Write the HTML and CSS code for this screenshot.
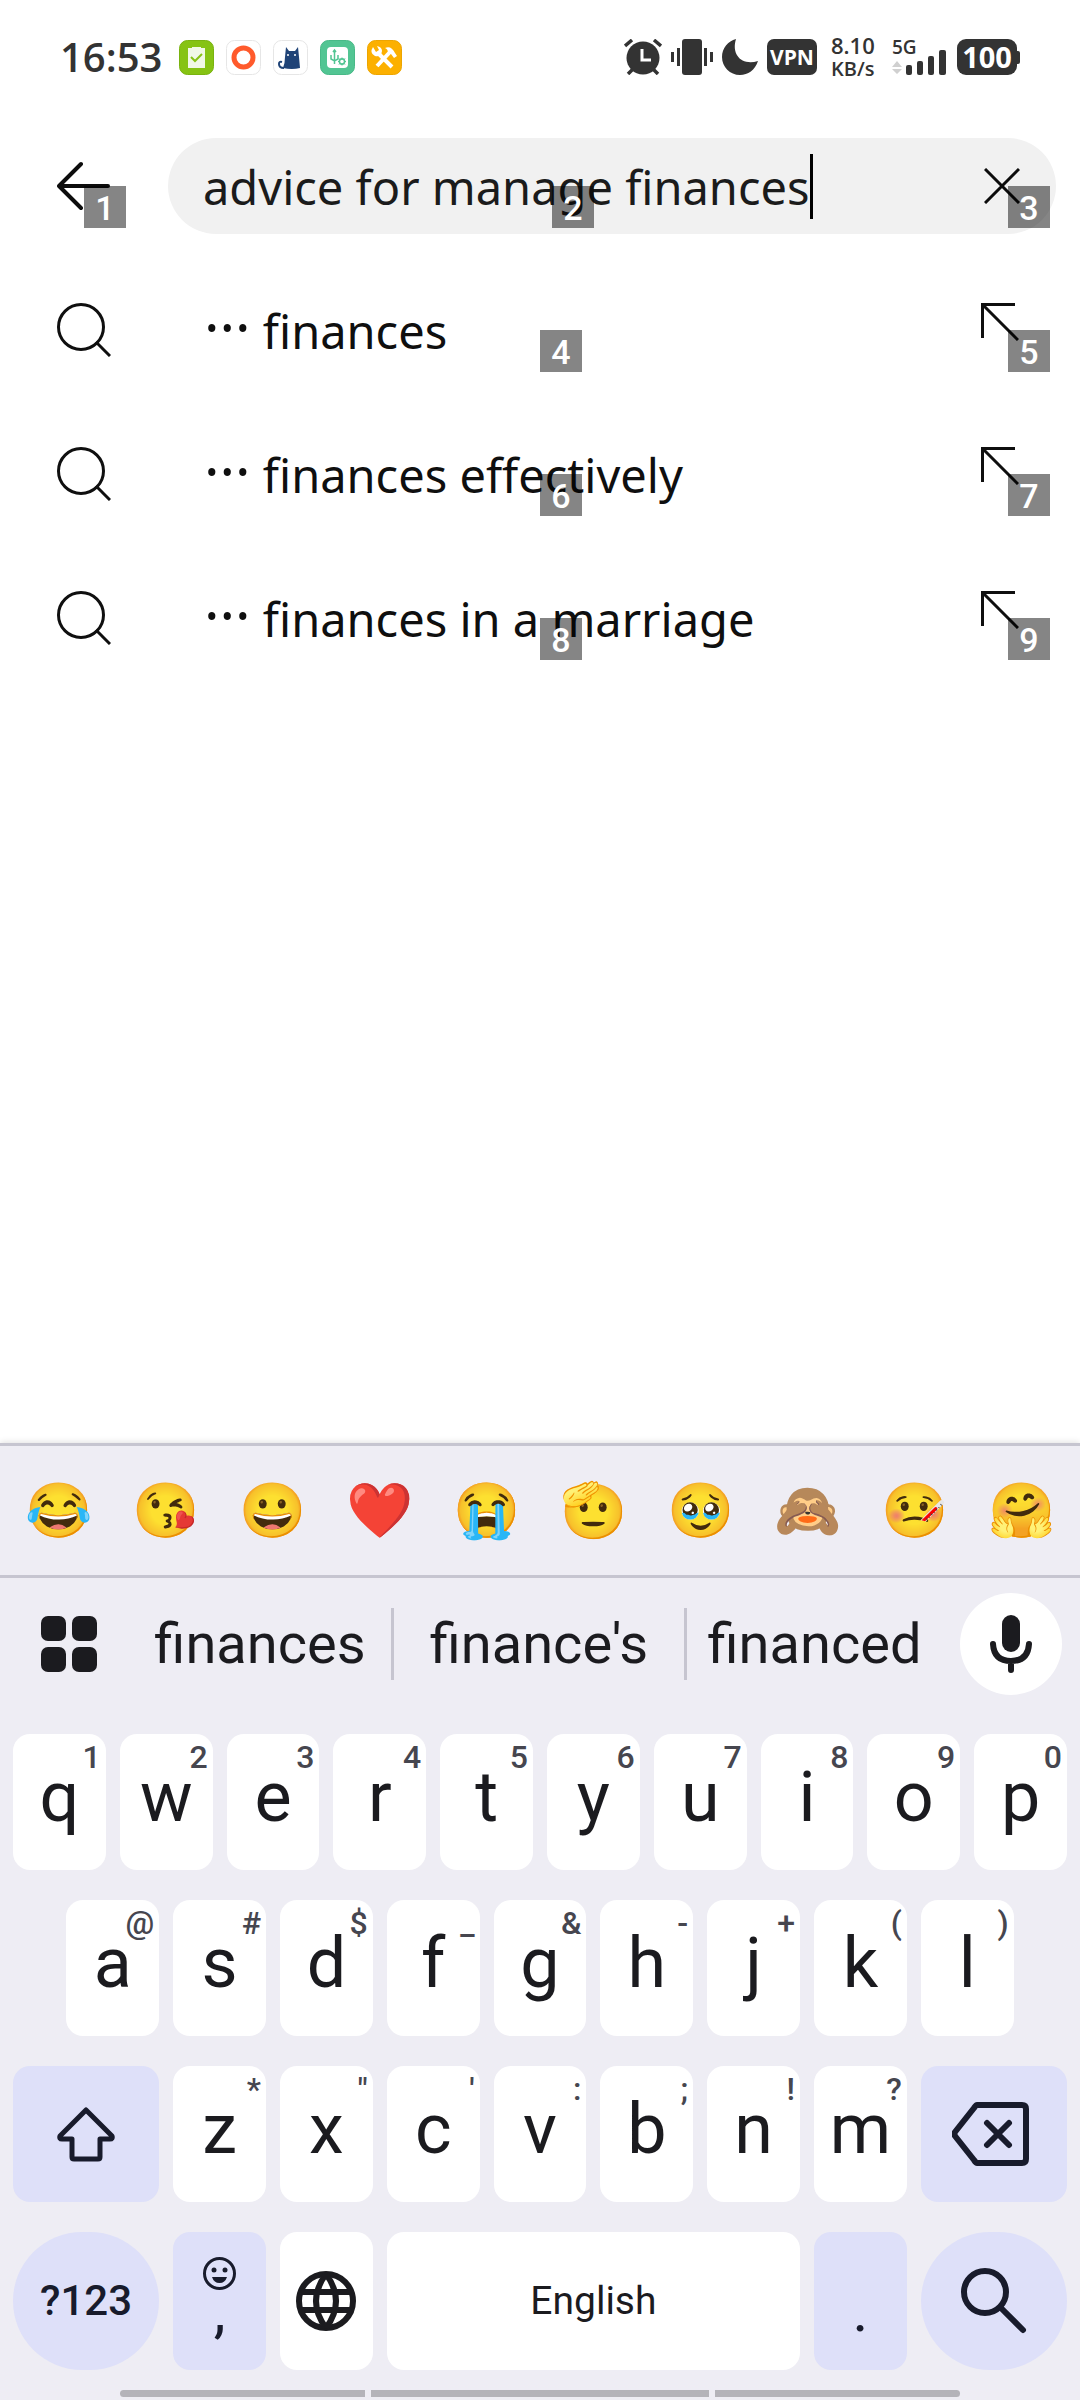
FILE: index.html
```html
<!DOCTYPE html>
<html lang="en">
<head>
<meta charset="utf-8">
<meta name="viewport" content="width=device-width, initial-scale=1">
<title>Search</title>
<link rel="stylesheet" href="styles.css">
</head>
<body>
<div class="screen">
  <div class="status">
    <span class="clock">16:53</span>
    <div class="apps">
      <svg viewBox="0 0 35 35"><rect x=".5" y=".5" width="34" height="34" rx="8" fill="#86c313" stroke="#79b30f"/><path d="M9 8h4V7h9v1h4v20H9z" fill="#f1f8e6"/><path d="M12 17l4 4 7-7" fill="none" stroke="#86c313" stroke-width="2"/></svg>
      <svg viewBox="0 0 35 35"><rect x=".5" y=".5" width="34" height="34" rx="8" fill="#fff" stroke="#e6e6e6"/><circle cx="17.500" cy="17.500" r="9.500" fill="none" stroke="#ff5a2c" stroke-width="5"/></svg>
      <svg viewBox="0 0 35 35"><rect x=".5" y=".5" width="34" height="34" rx="8" fill="#fff" stroke="#e6e6e6"/><path d="M10 28q2-5 2-11l1-10 3 4h6l3-4 1 10 1 11q-8 2-17 0z" fill="#1f4377"/><path d="M11 28q-5 0-5-4 0-3 3-2" fill="none" stroke="#1f4377" stroke-width="2"/><circle cx="15" cy="15" r="1" fill="#fff"/><circle cx="22" cy="15" r="1" fill="#fff"/></svg>
      <svg viewBox="0 0 35 35"><rect x=".5" y=".5" width="34" height="34" rx="8" fill="#52c593" stroke="#48b987"/><rect x="7" y="7" width="21" height="21" rx="4" fill="#fff"/><path d="M14.500 11v13M11 15v4l3.500 2L18 19v-4M13 12l1.500-2 1.500 2" fill="none" stroke="#52c593" stroke-width="1.500"/><circle cx="22" cy="21.500" r="2.600" fill="none" stroke="#52c593" stroke-width="1.600"/><path d="M22 17.500v8M18 21.500h1M25 21.500h1M19 18.500l1 1M25 18.500l-1 1M19 24.500l1-1M25 24.500l-1-1" stroke="#52c593" stroke-dasharray="1.500 5"/></svg>
      <svg viewBox="0 0 35 35"><rect x=".5" y=".5" width="34" height="34" rx="8" fill="#fcb000" stroke="#eda500"/><path d="M10 26L23 12M11 13l14 14" stroke="#fff" stroke-width="4"/><path d="M18 8q6-3 10 5l2 3-3 2-3-4-3-1q0-4-3-5z" fill="#fff"/><path d="M6 7q-4 6 2 9 3 1 6-1l1-4q0-4-5-5l2 4-3 2z" fill="#fff"/></svg>
    </div>
    <div class="signals">
      <svg class="alarm" viewBox="0 0 38 36"><circle cx="19" cy="19" r="16.500" fill="#333"/><path d="M1 7l7-6M37 7l-7-6M4 35l5-5M34 35l-5-5" stroke="#333" stroke-width="3.500"/><path d="M18 10v11h9" fill="none" stroke="#fff" stroke-width="3"/></svg>
      <svg class="vibrate" viewBox="0 0 42 36"><rect x="11" width="20" height="36" rx="3" fill="#333"/><path d="M1.500 13v10M7.500 9v18M34.500 9v18M40.500 13v10" stroke="#333" stroke-width="3"/></svg>
      <svg class="moon" viewBox="0 0 36 36"><path d="M14 0C9 16 20 27 36 22c-3 9-10 14-18 14C8 36 0 28 0 18 0 9 6 2 14 0z" fill="#333"/></svg>
      <span class="vpn">VPN</span>
      <span class="speed"><b>8.10</b><b class="unit">KB/s</b></span>
      <div class="cell">
        <b>5G</b>
        <svg viewBox="0 0 55 25"><path d="M0 18l5-6 5 6zM0 20h10l-5 5z" transform="translate(0 -1)" fill="#d0d0d0"/><g fill="#333"><rect x="14" y="15" width="6" height="10" rx="2"/><rect x="25" y="11" width="6" height="14" rx="2"/><rect x="36" y="6" width="6" height="19" rx="2"/><rect x="47" width="7" height="25" rx="2"/></g></svg>
      </div>
      <span class="battery">100</span>
    </div>
  </div>

  <form class="header">
    <button type="button" class="back" aria-label="Back">
      <svg viewBox="0 0 54 50"><path d="M51 25H3M24 3L2 25l22 22" fill="none" stroke="#0c0c0c" stroke-width="4" stroke-linecap="round" stroke-linejoin="round"/></svg>
      <span class="tag">1</span>
    </button>
    <div class="pill">
      <div class="field">
        <input type="text" aria-label="Search" value="advice for manage finances"><i class="caret"></i>
        <span class="tag">2</span>
      </div>
      <button type="button" class="clear" aria-label="Clear">
        <svg viewBox="0 0 36 36"><path d="M1 1l34 34M35 1L1 35" stroke="#0c0c0c" stroke-width="3"/></svg>
        <span class="tag">3</span>
      </button>
    </div>
  </form>

  <ul class="results">
    <li>
      <svg class="lens" viewBox="0 0 54 54"><circle cx="24" cy="24" r="22.500"/><path d="M39 39l14 14"/></svg>
      <a href="#"><span class="dots">···</span> finances</a>
      <button type="button" aria-label="Use suggestion"><svg viewBox="0 0 38 38"><path d="M34 1.500H1.500V35M2 2l35 35"/></svg><span class="tag">5</span></button>
      <span class="tag">4</span>
    </li>
    <li>
      <svg class="lens" viewBox="0 0 54 54"><circle cx="24" cy="24" r="22.500"/><path d="M39 39l14 14"/></svg>
      <a href="#"><span class="dots">···</span> finances effectively</a>
      <button type="button" aria-label="Use suggestion"><svg viewBox="0 0 38 38"><path d="M34 1.500H1.500V35M2 2l35 35"/></svg><span class="tag">7</span></button>
      <span class="tag">6</span>
    </li>
    <li>
      <svg class="lens" viewBox="0 0 54 54"><circle cx="24" cy="24" r="22.500"/><path d="M39 39l14 14"/></svg>
      <a href="#"><span class="dots">···</span> finances in a marriage</a>
      <button type="button" aria-label="Use suggestion"><svg viewBox="0 0 38 38"><path d="M34 1.500H1.500V35M2 2l35 35"/></svg><span class="tag">9</span></button>
      <span class="tag">8</span>
    </li>
  </ul>

  <div class="keyboard">
    <div class="emojis">
      <button>😂</button><button>😘</button><button>😀</button><button>❤️</button><button>😭</button><button>🫡</button><button>🥹</button><button>🙈</button><button>🤒</button><button>🤗</button>
    </div>
    <div class="suggest">
      <button class="menu" aria-label="Menu"><svg viewBox="0 0 56 56"><g fill="#1b1b1f"><rect width="25" height="25" rx="7"/><rect x="31" width="25" height="25" rx="7"/><rect y="31" width="25" height="25" rx="7"/><rect x="31" y="31" width="25" height="25" rx="7"/></g></svg></button>
      <button class="word">finances</button>
      <button class="word">finance's</button>
      <button class="word">financed</button>
      <button class="mic" aria-label="Voice input"><svg viewBox="0 0 42 58"><rect x="12" y="0" width="18" height="37" rx="9" fill="#1b1b1f"/><path d="M3 29q1 17 18 17t18-17M21 46v9" fill="none" stroke="#1b1b1f" stroke-width="6" stroke-linecap="round"/></svg></button>
    </div>
    <div class="keys">
      <button>q<sup>1</sup></button><button>w<sup>2</sup></button><button>e<sup>3</sup></button><button>r<sup>4</sup></button><button>t<sup>5</sup></button><button>y<sup>6</sup></button><button>u<sup>7</sup></button><button>i<sup>8</sup></button><button>o<sup>9</sup></button><button>p<sup>0</sup></button>
      <button class="indent">a<sup>@</sup></button><button>s<sup>#</sup></button><button>d<sup>$</sup></button><button>f<sup>_</sup></button><button>g<sup>&amp;</sup></button><button>h<sup>-</sup></button><button>j<sup>+</sup></button><button>k<sup>(</sup></button><button>l<sup>)</sup></button>
      <button class="wide tint" aria-label="Shift"><svg class="shift" viewBox="0 0 58 56"><path d="M29 4L3 30q-1 3 2 3h10v18q0 2 2 2h24q2 0 2-2V33h10q3 0 2-3z" fill="none" stroke="#181b2c" stroke-width="5" stroke-linejoin="round"/></svg></button>
      <button>z<sup>*</sup></button><button>x<sup>"</sup></button><button>c<sup>'</sup></button><button>v<sup>:</sup></button><button>b<sup>;</sup></button><button>n<sup>!</sup></button><button>m<sup>?</sup></button>
      <button class="wide tint" aria-label="Backspace"><svg class="erase" viewBox="0 0 83 64"><path d="M25 3h45q4 0 4 4v50q0 4-4 4H25q-1 0-3-3L3 34q-1-2 0-4L22 6q2-3 3-3zM35 21l22 22M57 21L35 43" fill="none" stroke="#181b2c" stroke-width="6" stroke-linecap="round" stroke-linejoin="round"/></svg></button>
      <button class="wide tint round symbols">?123</button>
      <button class="tint comma"><svg viewBox="0 0 33 33" aria-hidden="true"><circle cx="16.500" cy="16.500" r="15" fill="none" stroke="#181b2c" stroke-width="3"/><circle cx="11" cy="13" r="2.500" fill="#181b2c"/><circle cx="22" cy="13" r="2.500" fill="#181b2c"/><path d="M9 20h15q-2 6-7.500 6T9 20z" fill="#181b2c"/></svg><span>,</span></button>
      <button aria-label="Change language"><svg class="globe" viewBox="0 0 60 60"><g fill="none" stroke="#1b1b1f" stroke-width="6"><circle cx="30" cy="30" r="27"/><path d="M5 21h50M5 39h50M30 3q-20 27 0 54M30 3q20 27 0 54"/></g></svg></button>
      <button class="space">English</button>
      <button class="tint period"><span>.</span></button>
      <button class="wide tint round" aria-label="Search"><svg class="find" viewBox="0 0 66 66"><path d="M40 40l22 22" stroke="#181b2c" stroke-width="6" stroke-linecap="round"/><circle cx="24" cy="24" r="21" fill="none" stroke="#181b2c" stroke-width="6"/></svg></button>
    </div>
    <div class="nav"><i></i><i></i><i></i></div>
  </div>
</div>
</body>
</html>
```
FILE: styles.css
```css
* { box-sizing: border-box; }
body { margin: 0; background: #fff; font-family: "Noto Sans", "Open Sans", sans-serif; color: #111; }
button { border: 0; margin: 0; padding: 0; background: none; color: inherit; font: inherit; position: relative; display: flex; align-items: center; justify-content: center; }
svg { display: block; flex: none; }
.screen { min-height: 100vh; display: flex; flex-direction: column; }

/* status bar */
.status { height: 114px; padding: 0 63px 0 60px; display: flex; align-items: center; color: #333; }
.clock { font: 600 40px/48px "Open Sans", sans-serif; width: 119px; }
.apps { display: flex; gap: 12px; }
.apps svg { width: 35px; height: 35px; }
.signals { margin-left: auto; display: flex; align-items: center; gap: 9px; }
.alarm { width: 38px; height: 36px; }
.vibrate { width: 42px; height: 36px; }
.moon { width: 36px; height: 36px; }
.vpn { width: 50px; height: 36px; border-radius: 7px; background: #333; color: #fff; font: 700 21px/36px "Open Sans", sans-serif; text-align: center; }
.speed { width: 57px; padding-left: 5px; display: flex; flex-direction: column; font: 600 22px/23px "Open Sans", sans-serif; }
.speed b { font-weight: 600; }
.speed .unit { font-size: 20px; }
.cell { width: 56px; height: 36px; position: relative; display: flex; align-items: flex-end; }
.cell b { position: absolute; left: 0; top: 0; font: 600 19px/16px "Open Sans", sans-serif; }
.cell svg { width: 55px; height: 25px; }
.battery { width: 60px; height: 36px; border-radius: 9px; background: #333; color: #fff; font: 700 29px/36px "Open Sans", sans-serif; text-align: center; position: relative; }
.battery::after { content: ""; position: absolute; left: 100%; top: 12px; width: 3px; height: 13px; background: #333; border-radius: 0 2px 2px 0; }

/* search header */
.header { height: 144px; display: flex; align-items: center; padding-right: 24px; }
.back { width: 168px; height: 144px; }
.back svg { width: 54px; height: 50px; }
.pill { flex: 1; height: 96px; border-radius: 48px; background: #f1f1f1; display: flex; }
.field { flex: 1; margin-right: 24px; padding-left: 35px; display: flex; align-items: center; position: relative; }
.field input { border: 0; padding: 2px 0 0; background: none; outline: 0; color: #1b1b1b; font: 47px/64px "Noto Sans", sans-serif; font-variant-ligatures: none; field-sizing: content; }
.caret { width: 3px; height: 65px; background: #000; }
.clear { width: 96px; padding-right: 12px; }
.clear svg { width: 36px; height: 36px; }
.tag { position: absolute; left: 50%; top: 50%; width: 42px; height: 42px; background: rgba(0, 0, 0, .48); color: #fff; font: 500 34px/44px Roboto, sans-serif; text-align: center; }

/* results */
.results { list-style: none; margin: 0; padding: 0; flex: 1; }
.results li { height: 144px; position: relative; display: flex; align-items: center; padding-left: 57px; }
.results a { flex: 1; padding-top: 2px; margin-left: 93px; color: #0f0f0f; text-decoration: none; white-space: nowrap; font: 47px/64px "Noto Sans", sans-serif; font-variant-ligatures: none; }
.dots { font-size: 58px; line-height: 0; }
.results svg { fill: none; stroke: #0f0f0f; stroke-width: 3; }
.lens { width: 54px; height: 54px; }
.results button { width: 144px; height: 144px; padding: 0 16px 16px 0; }
.results button svg { width: 38px; height: 38px; }

/* keyboard */
.keyboard { background: #eeedf4; border-top: 3px solid #c6c5d0; box-shadow: 0 -1px 6px rgba(0, 0, 0, .12); color: #1b1b1f; font-family: Roboto, sans-serif; }
.emojis { height: 132px; padding: 0 5px; border-bottom: 3px solid #c6c5d0; display: flex; }
.emojis button { flex: 1; font: 54px/64px "Noto Color Emoji", sans-serif; }
.suggest { height: 132px; display: grid; grid-template-columns: 129px 262fr 293fr 258fr 138px; align-items: center; justify-items: stretch; }
.menu { padding-left: 9px; }
.menu svg { width: 56px; height: 56px; }
.word { height: 72px; font-size: 56px; }
.word + .word { border-left: 3px solid #c6c5d0; }
.mic { width: 102px; height: 102px; border-radius: 51px; background: #fff; justify-self: center; }
.mic svg { width: 42px; height: 58px; }
.keys { padding: 24px 13px 0; display: grid; grid-template-columns: repeat(20, minmax(0, 1fr)); grid-template-rows: 136px 136px 136px 138px; gap: 30px 14px; }
.keys button { grid-column: span 2; background: #fff; border-radius: 17px; font-size: 70px; line-height: 80px; padding-bottom: 10px; }
.keys button:has(svg) { padding-bottom: 0; }
.keys .indent { grid-column: 2 / span 2; }
.keys .wide { grid-column: span 3; }
.keys .space { grid-column: span 8; font-size: 39px; padding-bottom: 0; }
.keys .tint { background: #dee0f9; color: #181b2c; }
.keys .round { border-radius: 69px; }
.keys .symbols { font-size: 42px; font-weight: 500; padding-bottom: 0; }
.keys sup { position: absolute; right: 5px; top: 4px; font-size: 32px; line-height: 38px; font-weight: 500; color: #46464f; }
.keys .comma, .keys .period { flex-direction: column; justify-content: flex-start; padding-top: 25px; font-size: 60px; line-height: 42px; }
.keys .comma svg { width: 33px; height: 33px; }
.keys .period { justify-content: flex-end; padding-bottom: 38px; }
.shift { width: 58px; height: 56px; }
.erase { width: 83px; height: 64px; }
.globe { width: 60px; height: 60px; }
.find { width: 66px; height: 66px; }
.nav { height: 30px; padding: 20px 120px 3px; display: grid; grid-template-columns: 245fr 338fr 245fr; gap: 6px; }
.nav i { background: #b4b3b9; }
.nav i:first-child { border-radius: 4px 0 0 4px; }
.nav i:last-child { border-radius: 0 4px 4px 0; }
```
